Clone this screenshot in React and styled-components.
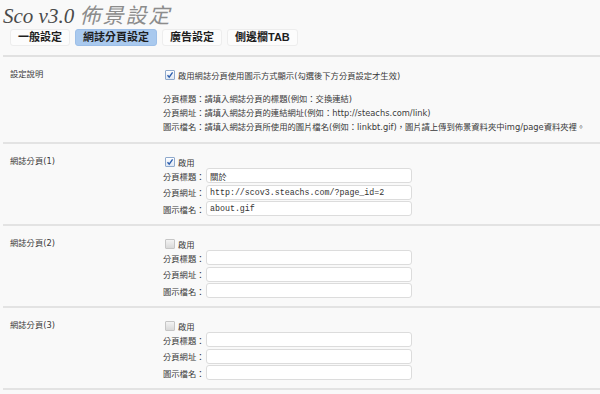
import React from "react";
import styled, { createGlobalStyle } from "styled-components";

const tabs = ["一般設定", "網誌分頁設定", "廣告設定", "側邊欄TAB"];

const pages = [
  { title: "關於", url: "http://scov3.steachs.com/?page_id=2", icon: "about.gif", on: true },
  { title: "", url: "", icon: "", on: false },
  { title: "", url: "", icon: "", on: false },
];

export default function App() {
  return (
    <Page>
      <GlobalStyle />
      <Title>
        Sco v3.0 <Light>佈景設定</Light>
      </Title>
      <TabBar>
        {tabs.map((t, i) => (
          <Tab key={t} active={i === 1}>
            {t}
          </Tab>
        ))}
      </TabBar>

      <Section>
        <Label>設定說明</Label>
        <Content>
          <CheckRow>
            <CheckBox checked />
            啟用網誌分頁使用圖示方式顯示(勾選後下方分頁設定才生效)
          </CheckRow>
          <Desc>
            <div>分頁標題：請填入網誌分頁的標題(例如：交換連結)</div>
            <div>分頁網址：請填入網誌分頁的連結網址(例如：http://steachs.com/link)</div>
            <div>
              圖示檔名：請填入網誌分頁所使用的圖片檔名(例如：linkbt.gif)，圖片請上傳到佈景資料夾中img/page資料夾裡。
            </div>
          </Desc>
        </Content>
      </Section>

      {pages.map((p, i) => (
        <Section key={i}>
          <Label>網誌分頁({i + 1})</Label>
          <Content>
            <CheckRow>
              <CheckBox checked={p.on} />
              啟用
            </CheckRow>
            <Fields>
              <FieldLabel>分頁標題：</FieldLabel>
              <Input readOnly value={p.title} />
              <FieldLabel>分頁網址：</FieldLabel>
              <Input readOnly value={p.url} />
              <FieldLabel>圖示檔名：</FieldLabel>
              <Input readOnly value={p.icon} />
            </Fields>
          </Content>
        </Section>
      ))}
    </Page>
  );
}

// little fake checkbox, the native one won't look like the old wp-admin one
function CheckBox({ checked }) {
  return (
    <Box checked={checked}>
      {checked && (
        <svg width="8" height="8" viewBox="0 0 8 8">
          <path d="M1.5 4.3 L3.2 6.2 L6.6 1.4" fill="none" stroke="#2d5fae" strokeWidth="1.4" />
        </svg>
      )}
    </Box>
  );
}

const GlobalStyle = createGlobalStyle`
  body {
    margin: 0;
    background: #f9f9f9;
    color: #3a3a3a;
    font-family: "DejaVu Sans", "Noto Sans CJK TC", sans-serif;
  }
`;

const Page = styled.div`
  padding-left: 3px;
`;

const Title = styled.h1`
  margin: 0;
  padding-top: 4px;
  height: 24px;
  font: italic normal 21px/24px "Liberation Serif", "Noto Sans CJK TC", serif;
  color: #4a4a4a;
`;

const Light = styled.span`
  color: #8c8c8c;
  letter-spacing: 2px;
`;

const TabBar = styled.div`
  display: flex;
  gap: 5px;
  padding: 1px 0 9px 7px;
  border-bottom: 2px solid #e1e1e1;
`;

const Tab = styled.div`
  box-sizing: border-box;
  height: 17px;
  padding: 0 7px;
  border: 1px solid ${({ active }) => (active ? "#9dbfe8" : "#ededed")};
  border-radius: 3px;
  background: ${({ active }) => (active ? "#a9c9ee" : "#fcfcfc")};
  font: bold 11px/15px "Liberation Sans", "Noto Sans CJK TC", sans-serif;
  color: #1e1e1e;
`;

const Section = styled.div`
  display: flex;
  padding: 11px 0 8px 7px;
  border-bottom: 2px solid #e3e3e3;
  font-size: 8.3px;
`;

const Label = styled.div`
  width: 153px;
  flex-shrink: 0;
  line-height: 13px;
`;

const Content = styled.div`
  display: flex;
  flex-direction: column;
`;

const CheckRow = styled.div`
  display: flex;
  align-items: center;
  gap: 3px;
  height: 13px;
  margin-left: 2px;
`;

const Box = styled.span`
  box-sizing: border-box;
  width: 10px;
  height: 10px;
  display: flex;
  align-items: center;
  justify-content: center;
  border: 1px solid ${({ checked }) => (checked ? "#8fa9cc" : "#c6c6c6")};
  border-radius: 1px;
  background: ${({ checked }) =>
    checked
      ? "linear-gradient(#ffffff, #dfe7f3)"
      : "linear-gradient(#f3f3f3, #d9d9d9)"};
`;

const Desc = styled.div`
  margin-top: 11px;
  line-height: 14px;
`;

const Fields = styled.div`
  display: grid;
  grid-template-columns: 43px 206px;
  row-gap: 1.5px;
  align-items: center;
`;

const FieldLabel = styled.span`
  white-space: nowrap;
`;

const Input = styled.input`
  box-sizing: border-box;
  height: 15px;
  width: 206px;
  margin: 0;
  padding: 0 3px;
  border: 1px solid #dcdcdc;
  border-radius: 3px;
  background: #fff;
  color: #333;
  font: 8.3px "Liberation Mono", "Noto Sans CJK TC", monospace;
  outline: none;
`;
